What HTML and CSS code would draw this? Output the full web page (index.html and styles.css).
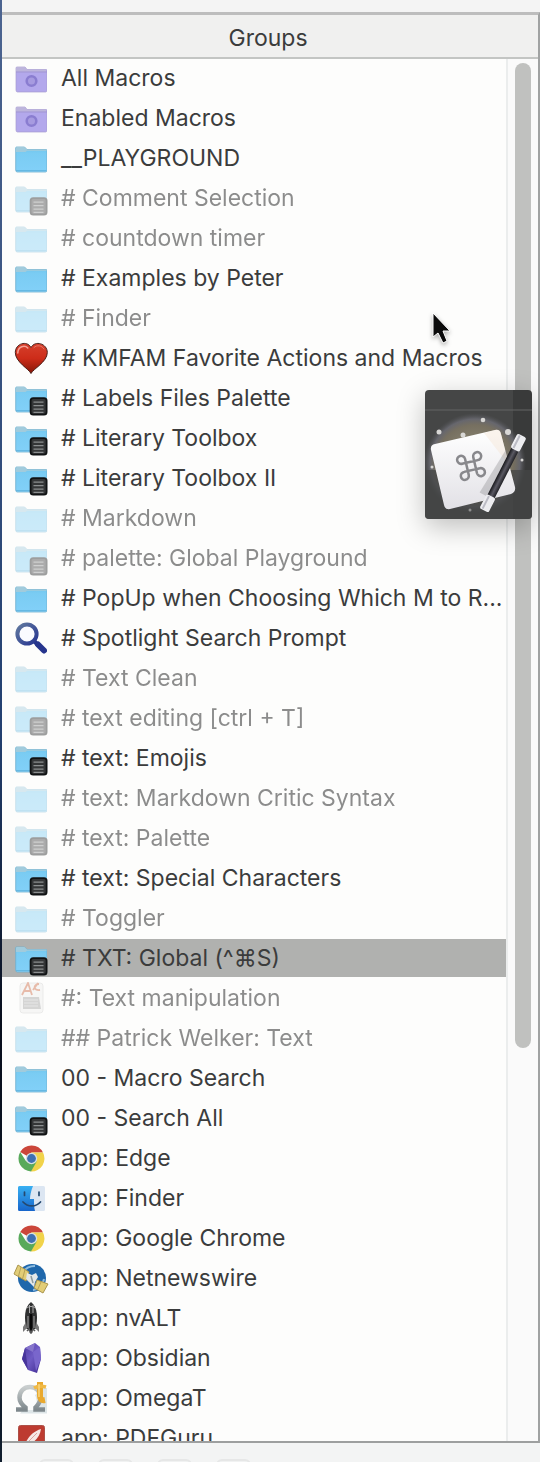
FILE: index.html
```html
<!DOCTYPE html>
<html lang="en">
<head>
<meta charset="utf-8">
<title>Groups</title>
<link rel="stylesheet" href="styles.css">
</head>
<body>
<svg class="defs" aria-hidden="true">
  <defs>
    <linearGradient id="blue" x1="0" y1="0" x2="0" y2="1"><stop offset="0" stop-color="#6fc3ea"/><stop offset=".25" stop-color="#7accf3"/><stop offset="1" stop-color="#82d0f8"/></linearGradient>
    <linearGradient id="redheart" x1="0" y1="0" x2="0" y2="1"><stop offset="0" stop-color="#d5402c"/><stop offset=".5" stop-color="#cd2c19"/><stop offset="1" stop-color="#841608"/></linearGradient>
    <linearGradient id="lens" x1="0" y1="0" x2="1" y2="1"><stop offset="0" stop-color="#61799f"/><stop offset="1" stop-color="#263591"/></linearGradient>
    <linearGradient id="finderblue" x1="0" y1="0" x2="0" y2="1"><stop offset="0" stop-color="#38b0f2"/><stop offset="1" stop-color="#1765cb"/></linearGradient>
    <linearGradient id="gem" x1="0" y1="0" x2="1" y2="1"><stop offset="0" stop-color="#4a36a0"/><stop offset=".5" stop-color="#6f5bc4"/><stop offset="1" stop-color="#3f2b91"/></linearGradient>
    <linearGradient id="silver" x1="0" y1="0" x2="0" y2="1"><stop offset="0" stop-color="#c9cece"/><stop offset="1" stop-color="#7e888c"/></linearGradient>
    <linearGradient id="paper" x1="0" y1="0" x2="0" y2="1"><stop offset="0" stop-color="#ffffff"/><stop offset="1" stop-color="#e2e1e6"/></linearGradient>
    <linearGradient id="wand" x1="0" y1="0" x2="1" y2="0"><stop offset="0" stop-color="#17171b"/><stop offset=".5" stop-color="#5a5963"/><stop offset="1" stop-color="#202025"/></linearGradient>
    <radialGradient id="aura"><stop offset="0" stop-color="#a9a38a"/><stop offset=".76" stop-color="#7f7765"/><stop offset=".88" stop-color="#6c6c74"/><stop offset="1" stop-color="#55565a" stop-opacity="0"/></radialGradient>
  </defs>
  <symbol id="smart" viewBox="0 0 32 32">
    <path d="M1 8V6q0-1 1-1h8l2 2.500h19q1 0 1 1V28q0 2-1.500 2h-28Q1 30 1 28z" fill="#b3a8ec" stroke="#a69bd0" stroke-width=".7"/>
    <path d="M1 8.500V6q0-1 1-1h8l2 2.500h19v2H1z" fill="#bdb5dc"/>
    <path d="M1 10h31" stroke="#9c91c7" stroke-width=".7"/>
    <circle cx="16.500" cy="19" r="4.800" fill="#a79be0" stroke="#8a7dd0" stroke-width="2.600"/>
  </symbol>
  <symbol id="folder" viewBox="0 0 32 32">
    <path d="M.7 8V6q0-1 1-1H9.500l2.500 2.500h19q1 0 1 1V28q0 2-1.500 2h-28.300Q.7 30 .7 28z" fill="url(#blue)" stroke="#6eafcd" stroke-width=".8"/>
    <path d="M1 9V6q0-1 1-1h7.500L12 7.500h19.600v1.300H12L10.500 10H1z" fill="#a1cbdc"/>
    <path d="M1 28.500h30.500" stroke="#65b8e2" stroke-width="1"/>
  </symbol>
  <symbol id="palette" viewBox="0 0 32 32" overflow="visible">
    <use href="#folder" width="32" height="32"/>
    <rect x="15.600" y="16.200" width="16" height="16.500" rx="2.600" fill="#343637" stroke="#101314" stroke-width="1.800"/>
    <path d="M18.500 20.200h10M18.500 23.700h10M18.500 27.200h10M18.500 30.300h10" stroke="#8b8e8f" stroke-width="1.200"/>
  </symbol>
  <symbol id="heart" viewBox="0 0 32 32" overflow="visible">
    <path d="M16 31.500C14 27 .3 20 .3 10.500.3 1.500 12-2 16 5.500 20-2 32.300 1.500 32.300 10.500 32.300 20 18 27 16 31.500z" fill="url(#redheart)" stroke="#4c211b" stroke-width="1"/>
    <path d="M2.800 11c.2-7 7-8 10-5" fill="none" stroke="#f5a195" stroke-width="1.500" stroke-linecap="round"/>
    <path d="M19 5.500c3-3 8-2 10 1.500" fill="none" stroke="#e77664" stroke-width="1" stroke-linecap="round"/>
  </symbol>
  <symbol id="search" viewBox="0 0 32 32">
    <path d="M19.500 19.500l3 3" stroke="#26358d" stroke-width="4"/>
    <path d="M23 22.500l6 6" stroke="#26358d" stroke-width="6" stroke-linecap="round"/>
    <circle cx="12" cy="12" r="9.600" fill="#fafbff" stroke="url(#lens)" stroke-width="4"/>
  </symbol>
  <symbol id="textdoc" viewBox="0 0 32 32">
    <path d="M5 4q0-3 3-3h17q3 0 3 3v24q0 3-3 3H8q-3 0-3-3z" fill="#ececec" stroke="#cfcfcf"/>
    <path d="M8 15h16l2 12H8z" fill="#9b9b9b"/>
    <path d="M9 18h14M9 21h14M9 24h14" stroke="#c8c8c8"/>
    <path d="M7 13L13 1l4 12M9 9h7M18 8l5-7M24 2c-6 0-6 7 1 6" fill="none" stroke="#c85b32" stroke-width="1.800"/>
  </symbol>
  <symbol id="chrome" viewBox="0 0 32 32">
    <path d="M16.500 16.500L5.200 10A13 13 0 0 1 28 10.500H16.500z" fill="#cb463a"/>
    <path d="M16.500 16.500V10.500H28A13 13 0 0 1 16 29.500z" fill="#f1d34a"/>
    <path d="M16.500 16.500l5.200 3L16 29.500A13 13 0 0 1 5.200 10l6 9.500z" fill="#58a95a"/>
    <circle cx="16.500" cy="16.500" r="5.700" fill="#d7dfe1"/>
    <circle cx="16.500" cy="16.500" r="4.400" fill="#3f70b2"/>
  </symbol>
  <symbol id="finder" viewBox="0 0 32 32">
    <rect x="3" y="4" width="27" height="25" rx="1.500" fill="#dce6f2"/>
    <path d="M4.500 4H18c-2 5-3 9-3 13h4c0 5 0 8 1 12H4.500Q3 29 3 27.500v-22Q3 4 4.500 4z" fill="url(#finderblue)"/>
    <path d="M9.500 10v3.500M24 10v3.500M8 20c5 5.500 13 5 17.500 0" stroke="#26496f" stroke-width="1.700" fill="none" stroke-linecap="round"/>
  </symbol>
  <symbol id="satellite" viewBox="0 0 32 32" overflow="visible">
    <circle cx="17" cy="16" r="14" fill="#1f67ab"/>
    <path d="M7 13Q10 4 20 4M29 17q-2 10-11 11" stroke="#8dbce0" stroke-width="2" fill="none"/>
    <path d="M3 3l11 7-3 9-12-7z" fill="#e2cd77" stroke="#aa954e"/>
    <path d="M22 18l11 4-5 9-9-5z" fill="#e2cd77" stroke="#aa954e"/>
    <path d="M6 5L3.500 14M10 7.500L7.500 17M26 20l-3.500 8" stroke="#b6a055" stroke-width="1"/>
    <path d="M12 11l5 2 4-2 2 4-3 5-1 5-5-5-3-3z" fill="#e4e8e9"/>
    <path d="M16 14l2 7" stroke="#8d9b9e" stroke-width="1.500"/>
  </symbol>
  <symbol id="rocket" viewBox="0 0 32 32">
    <path d="M16 0c7 5 7 17 4.500 27h-9C9 17 9 5 16 0z" fill="#303131"/>
    <path d="M12 6c2-2 6-2 8 0M14.500 3v8M18 3v8" stroke="#aaa" stroke-width="1" fill="none"/>
    <path d="M13 14v12M19 14v12" stroke="#858585" stroke-width="1.400"/>
    <path d="M16 12v19" stroke="#080808" stroke-width="2.500"/>
    <path d="M11 20l-3 5v5l4-4M21 20l3 5v5l-4-4" fill="#787878"/>
    <path d="M12 29l2-2 2 4 2-4 2 2" stroke="#555" stroke-width="1.600" fill="none"/>
  </symbol>
  <symbol id="obsidian" viewBox="0 0 32 32">
    <path d="M20 1l5 4 1 12-4 14-9-3-6-11 3-11z" fill="url(#gem)"/>
    <path d="M20 1l-2 9-8-4z" fill="#8675cb"/>
    <path d="M18 10l7-5 1 12-5 12z" fill="#7966cc"/>
    <path d="M7 17l3-11 3 22z" fill="#47349a"/>
  </symbol>
  <symbol id="omega" viewBox="0 0 32 32" overflow="visible">
    <path d="M5 31.500h27V6h-6z" fill="#dde5e7"/>
    <path d="M11 28C7 23 9 9 15 9s9 14 5 19z" fill="#fbfcfc"/>
    <path d="M1 27.500h9.500v-2C6 22 4.500 19 4.500 15.500 4.500 9 9 5 15 5s10.500 4 10.500 10.500c0 3.500-1.500 6.500-5 10v2H30" fill="none" stroke="url(#silver)" stroke-width="4.500"/>
    <path d="M25 0v14q0 5 5 4" fill="none" stroke="#e9a92e" stroke-width="6"/>
    <path d="M19 6q5-3 12-1" fill="none" stroke="#f0b944" stroke-width="3.500"/>
    <path d="M24 2v13" stroke="#f8d67f" stroke-width="1.500"/>
  </symbol>
  <symbol id="pdf" viewBox="0 0 32 32">
    <rect x="3.500" y="3.500" width="26" height="27" rx="2" fill="#bd3b30" stroke="#ad5047"/>
    <path d="M26 7c-7 2-12 7-15 13l-2 5 6-3c6-3 10-8 11-15z" fill="#f6e8e5"/>
    <path d="M22 11L11 22" stroke="#d9a49f"/>
  </symbol>
</svg>

<div class="window">
  <div class="topbar"></div>
  <main class="panel">
    <h1 class="heading">Groups</h1>
    <div class="body">
      <ul class="groups">
        <li><button class="row"><svg class="icon"><use href="#smart"/></svg><span>All Macros</span></button></li>
        <li><button class="row"><svg class="icon"><use href="#smart"/></svg><span>Enabled Macros</span></button></li>
        <li><button class="row"><svg class="icon"><use href="#folder"/></svg><span>__PLAYGROUND</span></button></li>
        <li><button class="row off"><svg class="icon"><use href="#palette"/></svg><span># Comment Selection</span></button></li>
        <li><button class="row off"><svg class="icon"><use href="#folder"/></svg><span># countdown timer</span></button></li>
        <li><button class="row"><svg class="icon"><use href="#folder"/></svg><span># Examples by Peter</span></button></li>
        <li><button class="row off"><svg class="icon"><use href="#folder"/></svg><span># Finder</span></button></li>
        <li><button class="row"><svg class="icon"><use href="#heart"/></svg><span># KMFAM Favorite Actions and Macros</span></button></li>
        <li><button class="row"><svg class="icon"><use href="#palette"/></svg><span># Labels Files Palette</span></button></li>
        <li><button class="row"><svg class="icon"><use href="#palette"/></svg><span># Literary Toolbox</span></button></li>
        <li><button class="row"><svg class="icon"><use href="#palette"/></svg><span># Literary Toolbox II</span></button></li>
        <li><button class="row off"><svg class="icon"><use href="#folder"/></svg><span># Markdown</span></button></li>
        <li><button class="row off"><svg class="icon"><use href="#palette"/></svg><span># palette: Global Playground</span></button></li>
        <li><button class="row"><svg class="icon"><use href="#folder"/></svg><span># PopUp when Choosing Which M to R...</span></button></li>
        <li><button class="row"><svg class="icon"><use href="#search"/></svg><span># Spotlight Search Prompt</span></button></li>
        <li><button class="row off"><svg class="icon"><use href="#folder"/></svg><span># Text Clean</span></button></li>
        <li><button class="row off"><svg class="icon"><use href="#palette"/></svg><span># text editing [ctrl + T]</span></button></li>
        <li><button class="row"><svg class="icon"><use href="#palette"/></svg><span># text: Emojis</span></button></li>
        <li><button class="row off"><svg class="icon"><use href="#folder"/></svg><span># text: Markdown Critic Syntax</span></button></li>
        <li><button class="row off"><svg class="icon"><use href="#palette"/></svg><span># text: Palette</span></button></li>
        <li><button class="row"><svg class="icon"><use href="#palette"/></svg><span># text: Special Characters</span></button></li>
        <li><button class="row off"><svg class="icon"><use href="#folder"/></svg><span># Toggler</span></button></li>
        <li><button class="row selected" aria-current="true"><svg class="icon"><use href="#palette"/></svg><span># TXT: Global (^⌘S)</span></button></li>
        <li><button class="row off"><svg class="icon"><use href="#textdoc"/></svg><span>#: Text manipulation</span></button></li>
        <li><button class="row off"><svg class="icon"><use href="#folder"/></svg><span>## Patrick Welker: Text</span></button></li>
        <li><button class="row"><svg class="icon"><use href="#folder"/></svg><span>00 - Macro Search</span></button></li>
        <li><button class="row"><svg class="icon"><use href="#palette"/></svg><span>00 - Search All</span></button></li>
        <li><button class="row"><svg class="icon"><use href="#chrome"/></svg><span>app: Edge</span></button></li>
        <li><button class="row"><svg class="icon"><use href="#finder"/></svg><span>app: Finder</span></button></li>
        <li><button class="row"><svg class="icon"><use href="#chrome"/></svg><span>app: Google Chrome</span></button></li>
        <li><button class="row"><svg class="icon"><use href="#satellite"/></svg><span>app: Netnewswire</span></button></li>
        <li><button class="row"><svg class="icon"><use href="#rocket"/></svg><span>app: nvALT</span></button></li>
        <li><button class="row"><svg class="icon"><use href="#obsidian"/></svg><span>app: Obsidian</span></button></li>
        <li><button class="row"><svg class="icon"><use href="#omega"/></svg><span>app: OmegaT</span></button></li>
        <li><button class="row"><svg class="icon"><use href="#pdf"/></svg><span>app: PDFGuru</span></button></li>
      </ul>
      <div class="track"><div class="thumb"></div></div>
    </div>
  </main>
  <footer class="bottombar">
    <button class="tool" aria-label="Add group"></button>
    <button class="tool" aria-label="Remove group"></button>
    <button class="tool" aria-label="Enable group"></button>
    <button class="tool" aria-label="Group options"></button>
  </footer>
</div>

<svg class="cursor" viewBox="0 0 24 40" aria-hidden="true">
  <path d="M2 2v24l5-4 5 10 4-2-4-10h7z" fill="#0b0b0b" stroke="#fff" stroke-width="1"/>
</svg>

<div class="tile">
  <svg viewBox="0 0 107 129" aria-hidden="true">
    <path d="M0 20h107" stroke="#646565" stroke-width="1"/>
    <ellipse cx="50" cy="73" rx="51" ry="50" fill="url(#aura)" opacity=".85"/>
    <path d="M0 80h107v49H0z" fill="#444545" opacity=".75"/>
    <g fill="#d8d7d5"><circle cx="58" cy="30" r="2.300"/><circle cx="14" cy="42" r="2.500"/><circle cx="83" cy="42" r="3"/><circle cx="38" cy="45" r="2.500"/><circle cx="97" cy="70" r="1.500"/><circle cx="7" cy="77" r="1.500"/><circle cx="45" cy="120" r="1.500" opacity=".5"/></g>
    <path d="M10 54l60-14q5-1 6 4l14 53q1 5-4 7l-61 15q-5 1-6-4L6 60q-1-5 4-6z" fill="url(#paper)"/>
    <path d="M59 43l11-3q5-1 6 4l8 31z" fill="#f4e3d2" opacity=".4"/>
    <g transform="translate(46 76) rotate(-13) scale(.84)" fill="none" stroke="#88888c" stroke-width="3">
      <path d="M-5-5h10v10h-10zM-5-5h-4.500a4.800 4.800 0 1 1 4.500-5zM5-5v-5a4.800 4.800 0 1 1 4.500 5zM5 5h4.500a4.800 4.800 0 1 1-4.500 5zM-5 5v5a4.800 4.800 0 1 1-4.500-5z"/>
    </g>
    <g transform="translate(78 83) rotate(27)">
      <path d="M-8-22h4v50h-8z" fill="#77777c" opacity=".3"/>
      <rect x="-4" y="-30" width="8" height="60" fill="url(#wand)"/>
      <rect x="-5" y="-42" width="10" height="16" rx="2" fill="#ededf0"/>
      <rect x="-5" y="26" width="10" height="16" rx="2" fill="#ededf0"/>
      <path d="M-2-41v14M-2 27v14" stroke="#bcbcc5" stroke-width="2"/>
    </g>
  </svg>
</div>
</body>
</html>
```
FILE: styles.css
```css
* { box-sizing: border-box; }

body {
  position: relative;
  margin: 0;
  background: linear-gradient(#4c6490, #234070 50%, #080e1c 70%, #101d2d);
  color: #3b3c3c;
  font-family: Inter, "Liberation Sans", sans-serif;
  font-size: 23px;
  line-height: 38px;
}

.defs { position: absolute; width: 0; height: 0; }

.window {
  display: flex;
  flex-direction: column;
  height: 100vh;
  margin-left: 2px;
  background: #f3f4f4;
}

.topbar { flex: none; height: 12px; background: #f4f4f4; }

.panel {
  display: flex;
  flex: 1;
  flex-direction: column;
  min-height: 0;
  border-top: 3px solid #bdbdbd;
  border-right: 2px solid #a0a2a2;
  border-bottom: 2px solid #9d9f9f;
}

.heading {
  flex: none;
  margin: 0;
  padding: 4px 4px 0 0;
  border-bottom: 2px solid #c3c5c3;
  background: #f0f0ef;
  font-size: 23px;
  font-weight: 400;
  text-align: center;
}

.body {
  display: flex;
  flex: 1;
  min-height: 0;
  background: #fdfdfc;
}

.groups {
  flex: 1;
  min-width: 0;
  margin: 0;
  padding: 0;
  overflow: hidden;
  list-style: none;
}

.groups li { padding-bottom: 2px; }

.row {
  display: flex;
  align-items: center;
  gap: 14px;
  width: 100%;
  height: 38px;
  padding: 0 0 0 13px;
  border: 0;
  background: none;
  color: inherit;
  font: inherit;
  text-align: left;
  white-space: nowrap;
}

.row.off span { opacity: 0.58; }
.row.off .icon { opacity: 0.4; }
.row.selected { background: #b0b1af; }

.icon { flex: none; width: 32px; height: 32px; overflow: visible; }

.track {
  flex: none;
  width: 32px;
  padding: 4px 7px;
  border-left: 2px solid #ebeded;
  background: #fafafa;
}

.thumb {
  width: 16px;
  height: calc(72% - 4px);
  border-radius: 8px;
  background: #c0c1bf;
}

.bottombar {
  display: flex;
  flex: none;
  gap: 24px;
  height: 19px;
  padding: 16px 37px 0;
  overflow: hidden;
}

.tool {
  flex: none;
  width: 35px;
  height: 30px;
  padding: 0;
  border: 2px solid #e6e7e7;
  border-radius: 6px;
  background: #f1f2f2;
}

.cursor {
  position: absolute;
  top: 311px;
  right: 85px;
  width: 24px;
  height: 40px;
  filter: drop-shadow(0 2px 2px rgba(0, 0, 0, 0.3));
}

.tile {
  position: absolute;
  top: 390px;
  right: 8px;
  width: 107px;
  height: 129px;
  overflow: hidden;
  border-radius: 4px;
  background: linear-gradient(90deg, #454646 82%, #393a3a 82%);
  box-shadow: 0 8px 28px rgba(0, 0, 0, 0.25);
}

.tile svg { display: block; width: 100%; height: 100%; }
```
